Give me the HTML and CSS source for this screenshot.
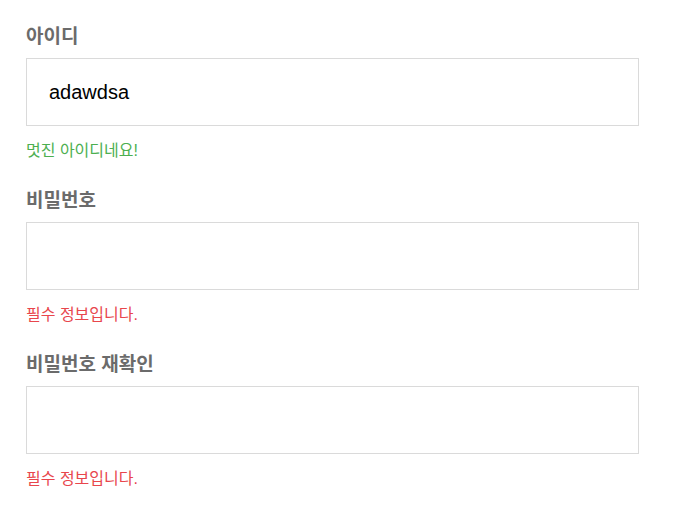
FILE: index.html
```html
<!DOCTYPE html>
<html lang="ko">
<head>
    <meta charset="UTF-8">
    <meta name="viewport" content="width=device-width, initial-scale=1.0">
    <title>회원가입</title>
    <link rel="stylesheet" href="styles.css">
</head>
<body>
    <div class="join-form">
        <div class="field">
            <label class="field-label" for="userid">아이디</label>
            <input class="field-input" type="text" id="userid" value="adawdsa">
            <p class="field-msg success">멋진 아이디네요!</p>
        </div>
        <div class="field">
            <label class="field-label" for="userpw">비밀번호</label>
            <input class="field-input" type="password" id="userpw">
            <p class="field-msg error">필수 정보입니다.</p>
        </div>
        <div class="field">
            <label class="field-label" for="userpw2">비밀번호 재확인</label>
            <input class="field-input" type="password" id="userpw2">
            <p class="field-msg error">필수 정보입니다.</p>
        </div>
    </div>
</body>
</html>
```

FILE: styles.css
```css
body {
    background-color: white;
    margin: 0;
    font-family: "Liberation Sans", "Noto Sans CJK KR", sans-serif;
}

.join-form {
    width: 613px;
    padding: 26px 0 0 26px;
}

.field {
    display: flex;
    flex-direction: column;
    margin-bottom: 29px;
}

.field-label {
    font-size: 19px;
    line-height: 22px;
    font-weight: bold;
    color: #6b6b6b;
    margin-bottom: 10px;
}

.field-input {
    box-sizing: border-box;
    width: 100%;
    height: 68px;
    border: 1px solid #dadada;
    padding: 0 22px;
    font-family: "Liberation Sans", "Noto Sans CJK KR", sans-serif;
    font-size: 20px;
    color: black;
    outline: none;
    margin: 0;
}

.field-msg {
    margin: 15px 0 0 0;
    font-size: 16px;
    line-height: 20px;
}

.success {
    color: #4caf50;
}

.error {
    color: #e8464c;
}
```
